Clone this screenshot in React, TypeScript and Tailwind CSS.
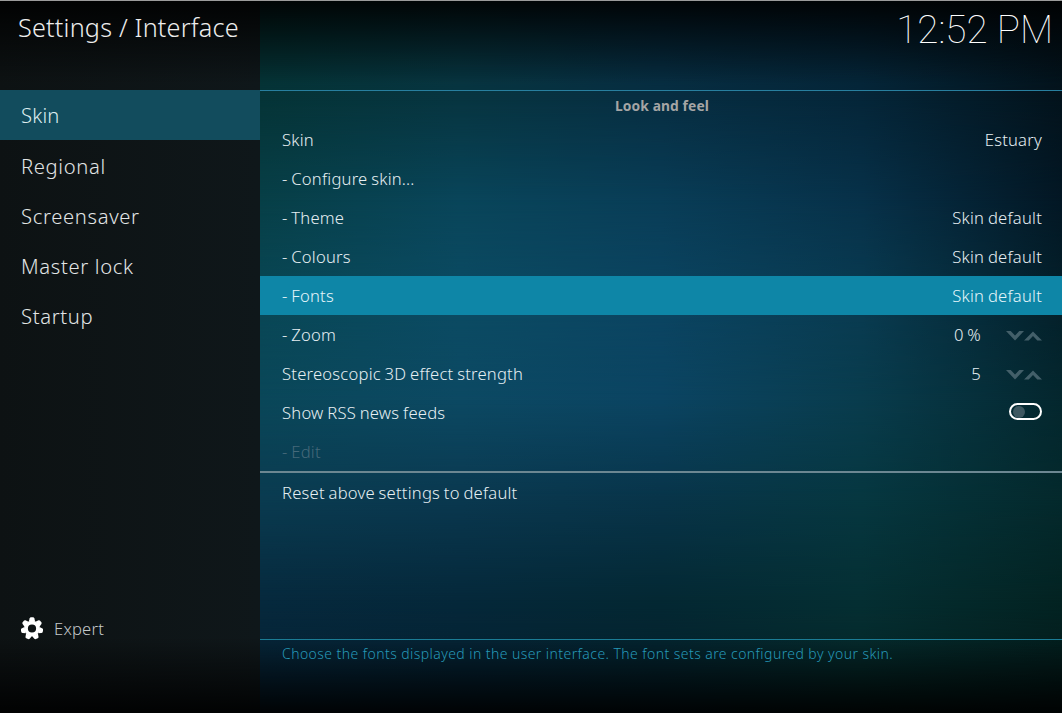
import React from "react";

type Setting = {
  label: string;
  value?: string;
  control?: "spinner" | "toggle";
  focused?: boolean;
  disabled?: boolean;
};

const categories = ["Skin", "Regional", "Screensaver", "Master lock", "Startup"];

const settings: Setting[] = [
  { label: "Skin", value: "Estuary" },
  { label: "- Configure skin..." },
  { label: "- Theme", value: "Skin default" },
  { label: "- Colours", value: "Skin default" },
  { label: "- Fonts", value: "Skin default", focused: true },
  { label: "- Zoom", value: "0 %", control: "spinner" },
  { label: "Stereoscopic 3D effect strength", value: "5", control: "spinner" },
  { label: "Show RSS news feeds", control: "toggle" },
  { label: "- Edit", disabled: true },
];

// Colour rows of the backdrop; each one fades in over the row above it.
const backdrop: { y: number; colors: string[] }[] = [
  { y: 0, colors: ["#032e2f", "#06303a", "#05283c", "#042234", "#03121b"] },
  { y: 100, colors: ["#053437", "#073541", "#072e42", "#052639", "#03131c"] },
  { y: 200, colors: ["#073f47", "#09455a", "#093d57", "#073149", "#031724"] },
  { y: 300, colors: ["#094755", "#0b4b63", "#0b4461", "#093b51", "#04202a"] },
  { y: 400, colors: ["#0a4759", "#0c4963", "#0b4462", "#093c4d", "#04272e"] },
  { y: 500, colors: ["#0a3b50", "#0a384f", "#083449", "#063740", "#04292c"] },
  { y: 600, colors: ["#06293d", "#05283a", "#042833", "#052f33", "#032322"] },
  { y: 713, colors: ["#051f31", "#041d2d", "#031e29", "#042322", "#031919"] },
];

function Backdrop() {
  return (
    <div className="absolute inset-y-0 right-0 left-[260px]">
      {backdrop.map((row, i) => {
        const mask =
          i === 0
            ? undefined
            : `linear-gradient(to bottom, transparent ${backdrop[i - 1].y}px, black ${row.y}px)`;
        return (
          <div
            key={row.y}
            className="absolute inset-0"
            style={{
              background: `linear-gradient(to right, ${row.colors.join(", ")})`,
              maskImage: mask,
            }}
          />
        );
      })}
    </div>
  );
}

function Spinner() {
  return (
    <svg width="36" height="10" viewBox="0 0 36 10" className="mt-[3px] ml-[25px] fill-[#435f69]">
      <path d="M0 0H4.7L9 4.6 13.3 0H18L9 9.6Z" />
      <path d="M18 9.6H22.7L27 5 31.3 9.6H36L27 0.6Z" />
    </svg>
  );
}

function Toggle() {
  return (
    <div className="mb-[2px] flex h-[17px] w-[33px] items-center rounded-full border-2 border-white pl-[2px]">
      <div className="size-[12px] rounded-full bg-[#3e5861]" />
    </div>
  );
}

function SettingRow({ item }: { item: Setting }) {
  return (
    <div
      className={
        "flex h-[39px] items-center justify-between pr-5 pl-[22px] text-[16.6px] tracking-[0.22px] [word-spacing:-0.8px] " +
        (item.focused ? "bg-[#0e86a7] text-[#e4f5fa]" : item.disabled ? "text-[#46697a]" : "text-[#e6eff3]")
      }
    >
      <span className="pt-px">{item.label}</span>
      <div className="flex items-center">
        {item.value && <span className="pt-px">{item.value}</span>}
        {item.control === "spinner" && <Spinner />}
        {item.control === "toggle" && <Toggle />}
      </div>
    </div>
  );
}

function Gear() {
  return (
    <svg width="22" height="23" viewBox="-11 -11.5 22 23" className="fill-white">
      <path
        fillRule="evenodd"
        d="M-7.8 0a7.8 7.8 0 1 0 15.6 0a7.8 7.8 0 1 0-15.6 0ZM-4.1 0a4.1 4.1 0 1 1 8.2 0a4.1 4.1 0 1 1-8.2 0Z"
      />
      {[0, 1, 2, 3, 4, 5, 6].map((n) => (
        <path
          key={n}
          transform={`rotate(${(n * 360) / 7})`}
          d="M-3.2-7L-2.3-10.2Q-2-11.2-1-11.2H1Q2-11.2 2.3-10.2L3.2-7Z"
        />
      ))}
    </svg>
  );
}

export default function App() {
  return (
    <div className="relative isolate h-[713px] w-[1062px] overflow-hidden bg-black font-['Noto_Sans',sans-serif] font-light">
      <Backdrop />
      <div className="absolute inset-y-0 left-0 w-[260px] bg-linear-to-r from-[#0d1213] to-[#0f171a]" />
      <div className="absolute inset-x-0 top-0 h-[84px] bg-linear-to-b from-black/90 to-transparent" />
      <div className="absolute inset-x-0 bottom-0 h-[76px] bg-linear-to-t from-black/90 to-transparent" />
      <div className="relative flex h-full">
        <aside className="flex w-[260px] flex-col">
          <div className="h-[90px]" />
          <nav>
            {categories.map((name, i) => (
              <div
                key={name}
                className={
                  "flex h-[50px] items-center pl-[21px] text-[20.2px] " +
                  (i === 0
                    ? "bg-[#124c5d] pt-px tracking-[0.2px] text-[#deecf0]"
                    : "pt-[3px] tracking-[0.67px] text-[#e2e5e6]")
                }
              >
                {name}
              </div>
            ))}
          </nav>
          <div className="mt-auto mb-[70px] flex h-[30px] items-center pl-[21px]">
            <Gear />
            <span className="ml-[11px] pt-[3px] text-[16.6px] tracking-[0.2px] text-[#c4c8ca]">Expert</span>
          </div>
        </aside>
        <main className="flex w-[802px] flex-col">
          <div className="h-[90px]" />
          <div className="h-px bg-[#287f9f]" />
          <h2 className="h-[29px] pl-[2px] text-center text-[13.8px] leading-[30px] font-bold tracking-[0.1px] text-[#a5a5a5]">
            Look and feel
          </h2>
          {settings.map((item) => (
            <SettingRow key={item.label} item={item} />
          ))}
          <div className="h-[2px] bg-[#6c8792]" />
          <SettingRow item={{ label: "Reset above settings to default" }} />
          <div className="mt-auto h-px bg-[#1b7c95]" />
          <p className="h-[73px] pt-[3px] pl-[22px] text-[14px] leading-[21px] tracking-[0.43px] text-[#2699b8]">
            Choose the fonts displayed in the user interface. The font sets are configured by your skin.
          </p>
        </main>
      </div>
      <header className="absolute inset-x-0 top-0 flex h-[90px] items-start justify-between border-t border-[#9b9b9b] pl-[18px]">
        <h1 className="pt-[8px] text-[25.2px] leading-[36px] tracking-[0.2px] text-[#ededed]">Settings / Interface</h1>
        <div className="pt-[6px] pr-[9px] font-['Roboto',sans-serif] text-[38.6px] leading-[46px] font-thin text-white">
          12:52 PM
        </div>
      </header>
    </div>
  );
}
